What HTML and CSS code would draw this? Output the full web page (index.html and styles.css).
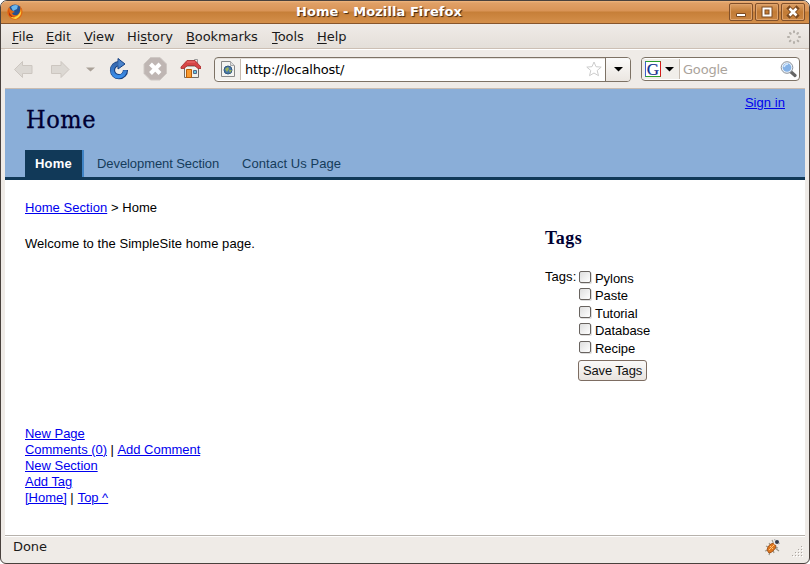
FILE: index.html
```html
<!DOCTYPE html>
<html lang="en">
<head>
<meta charset="utf-8">
<title>Home</title>
<link rel="stylesheet" href="styles.css">
</head>
<body>
<div class="window">
  <header class="titlebar">
    <svg class="fox" width="16" height="16" viewBox="0 0 16 16"><circle cx="8" cy="7.500" r="7" fill="#27518f"/><path d="M4 3Q7 0 11 1.500L10 5L6 7Z" fill="#69b6ee"/><path d="M2 3Q-.5 7 .5 10Q2.500 15.500 8 15.800Q14 15.500 15.500 9Q16 5 13 2Q14 9 10 11Q6 12 5 9L8 8L4 6Z" fill="#e36912"/><path d="M14 5Q15.500 12 9 15Q5 15 3 12Q9 15 12 10Q14 8 14 5Z" fill="#ffd43c"/><path d="M1.500 5Q2 9 4 11Q5 13 8 13Q4 14 2 11Z" fill="#b62c0c"/></svg>
    <h1 class="window-title">Home - Mozilla Firefox</h1>
    <div class="controls">
      <span class="control"><svg width="22" height="16"><path d="M6.500 9.500h9v3h-9z" fill="#fff" stroke="#7c4a20"/></svg></span>
      <span class="control"><svg width="22" height="16"><path d="M7.500 4.500h7v7h-7z" fill="none" stroke="#7c4a20" stroke-width="4"/><path d="M7.500 4.500h7v7h-7z" fill="none" stroke="#fff" stroke-width="2"/></svg></span>
      <span class="control"><svg width="22" height="16"><path d="M7.500 4.500l7 7m0-7l-7 7" stroke="#7c4a20" stroke-width="4.500" stroke-linecap="square"/><path d="M7.500 4.500l7 7m0-7l-7 7" stroke="#fff" stroke-width="2.600"/></svg></span>
    </div>
  </header>
  <nav class="menubar">
    <span class="menu m-file"><u>F</u>ile</span><span class="menu m-edit"><u>E</u>dit</span><span class="menu m-view"><u>V</u>iew</span><span class="menu m-history">Hi<u>s</u>tory</span><span class="menu m-bookmarks"><u>B</u>ookmarks</span><span class="menu m-tools"><u>T</u>ools</span><span class="menu"><u>H</u>elp</span>
    <svg class="throbber" width="16" height="16" viewBox="0 0 16 16"><g fill="none" stroke="#b5b0aa" stroke-width="2" stroke-linecap="round"><path d="M8 2.300v1M8 13v1M2 8h1M13 8h1M4 4l.7.7M11.600 11.600l.7.7M12 4l-.7.7M4.500 11.600l-.7.7"/></g></svg>
  </nav>
  <div class="toolbar">
    <svg class="nav-icons" width="196" height="38" viewBox="5 50 196 38">
      <defs><linearGradient id="reload" x1="0" y1="0" x2="0" y2="1"><stop stop-color="#3768ad"/><stop offset="1" stop-color="#3b8eea"/></linearGradient></defs>
      <g fill="#dcd8d3" stroke="#ccc6c0"><path d="M14.500 69.500l8-8v4h9.500v8h-9.500v4z"/><path d="M69 69.500l-8-8v4h-9.500v8h9.500v4z"/></g>
      <path d="M86 67.500h9l-4.500 4z" fill="#aaa198"/>
      <path d="M119 63.700A6.500 6.500 0 1 0 125.500 70" fill="none" stroke="#173f7e" stroke-width="5.200"/>
      <path d="M118 58.500l7 5.500-7 5z" fill="#4383d2" stroke="#173f7e"/>
      <path d="M119 63.700A6.500 6.500 0 1 0 125.200 70.200" fill="none" stroke="url(#reload)" stroke-width="3.600"/>
      <path d="M118.500 60l5 4-5 3z" fill="#4d83c8"/>
      <path d="M150.500 57.500h9.500l6.500 6.500v9.500l-6.500 6.500h-9.500L144 73.500V64z" fill="#bfb6b3" stroke="#cec8c4"/>
      <path d="M150.500 64l9.500 9.500m0-9.500L150.500 73.500" stroke="#fff" stroke-width="4"/>
      <path d="M184.500 66h14v11.500h-14z" fill="#f1f0ea" stroke="#716d68"/>
      <path d="M194.500 59.500h3v5h-3z" fill="#eee" stroke="#999"/>
      <path d="M181 67l6-6.500h8l6 6.500v1.500h-3l-3.500-3h-7l-3.500 3h-3z" fill="#d64545" stroke="#a52a2a" stroke-width=".8"/>
      <path d="M187 62h8" stroke="#ee7373"/>
      <path d="M186.500 69.500h5v8h-5z" fill="#f99a2f" stroke="#b95d08"/><path d="M193.500 70.500h3v3h-3z" fill="#62cae1" stroke="#568"/>
    </svg>
    <div class="address">
      <span class="favicon"><svg width="14" height="16"><path d="M.5.5h9l4 4v11H.5z" fill="#f4f4f2" stroke="#888"/><path d="M9.500.5v4h4" fill="#ddd" stroke="#aaa"/><circle cx="7" cy="9" r="4" fill="#4978a9" stroke="#315980"/><path d="M4 8l3-2 1 2-2 3zM8 9h3l-2 3z" fill="#9cb358"/></svg></span>
      <span class="url">http://localhost/</span>
      <svg class="star" width="16" height="16"><path d="M8 1l2 4.700 5.200.4-4 3.400 1.300 5.200L8 12l-4.500 2.700 1.300-5.200-4-3.400L6 5.700z" fill="#fff" stroke="#ccc"/></svg>
      <span class="drop"><svg width="9" height="5"><path d="M0 0h9L4.500 4.500z"/></svg></span>
    </div>
    <div class="search">
      <span class="engine"><b class="google">G</b><svg width="9" height="5"><path d="M0 0h9L4.500 4.500z"/></svg></span>
      <span class="placeholder">Google</span>
      <svg class="lens" width="17" height="17"><path d="M10.500 10.500l4.500 4" stroke="#666" stroke-width="3.200" stroke-linecap="round"/><circle cx="7" cy="6.500" r="5.800" fill="#edf3fa" stroke="#8a9199"/><circle cx="7" cy="6.500" r="4.300" fill="#85b2e6"/><path d="M4 6q1-3 4-3" fill="none" stroke="#d5e8fb" stroke-width="1.500"/></svg>
    </div>
  </div>
  <main class="page">
    <div class="banner">
      <div class="banner-top"><h2 class="heading">Home</h2><a class="signin" href="#">Sign in</a></div>
      <nav class="tabs"><a class="tab active">Home</a><a class="tab development">Development Section</a><a class="tab contact">Contact Us Page</a></nav>
    </div>
    <div class="content">
      <section class="left">
        <p class="crumbs"><a href="#">Home Section</a> &gt; Home</p>
        <p class="welcome">Welcome to the SimpleSite home page.</p>
      </section>
      <section class="right">
        <h3 class="tags-title">Tags</h3>
        <div class="tags-form">
          <span class="tags-label">Tags:</span>
          <div class="options">
            <label class="option"><i class="box"></i>Pylons</label>
            <label class="option"><i class="box"></i>Paste</label>
            <label class="option"><i class="box"></i>Tutorial</label>
            <label class="option"><i class="box"></i>Database</label>
            <label class="option"><i class="box"></i>Recipe</label>
            <button class="save">Save Tags</button>
          </div>
        </div>
      </section>
    </div>
    <footer class="links">
      <div><a href="#">New Page</a></div>
      <div><a href="#">Comments (0)</a> <span class="sep">|</span> <a href="#">Add Comment</a></div>
      <div><a href="#">New Section</a></div>
      <div><a href="#">Add Tag</a></div>
      <div><a href="#">[Home]</a> <span class="sep">|</span> <a href="#">Top ^</a></div>
    </footer>
  </main>
  <div class="status">
    <span class="done">Done</span>
    <svg class="bug" width="18" height="18"><path d="M5 5l2 3M2 8l4 2M1 13l4-1M5 17l1-3M10 15l-1-3M14 10l-3-1M8 2l2 4M15 13l-4-3" stroke="#99978a" stroke-width="1.200"/><path d="M3 12q1-6 7-7l2 3q-2 6-7 7z" fill="#df7820" stroke="#a6561c"/><path d="M5 12l5-5M6 8l3 3" stroke="#ffc47a"/><circle cx="12.500" cy="4" r="3" fill="#e8e8e8"/><circle cx="13" cy="4" r="2" fill="#333b4c"/><path d="M10 1.500l2 1M14 6l2-1" stroke="#aaa"/></svg>
    <svg class="grip" width="12" height="12"><g fill="#aaa5a0"><path d="M9 0h1v1H9zM6 3h1v1H6zM9 3h1v1H9zM3 6h1v1H3zM6 6h1v1H6zM9 6h1v1H9zM0 9h1v1H0zM3 9h1v1H3zM6 9h1v1H6zM9 9h1v1H9z"/></g><g fill="#fff"><path d="M10 1h1v1h-1zM7 4h1v1H7zM10 4h1v1h-1zM4 7h1v1H4zM7 7h1v1H7zM10 7h1v1h-1zM1 10h1v1H1zM4 10h1v1H4zM7 10h1v1H7zM10 10h1v1h-1z"/></g></svg>
  </div>
</div>
</body>
</html>
```
FILE: styles.css
```css
* { box-sizing: border-box; }
body { margin: 0; background: #fff; font-family: "DejaVu Sans", sans-serif; font-size: 13px; color: #1a1a1a; }
svg { display: block; flex: none; }
h1, h2, h3, p { margin: 0; }
.window { width: 810px; height: 564px; border: 1px solid #49413d; border-radius: 7px 7px 6px 6px; background: #efebe7; overflow: hidden; display: flex; flex-direction: column; }
.titlebar { height: 23px; flex: none; display: flex; align-items: center; padding: 0 4px 0 6px; background: linear-gradient(#efb67f 0, #e0a066 2px, #d99456 10px, #c67f38 11px, #d38e49 21px); border-bottom: 1px solid #87552c; }
.window-title { flex: 1; text-align: center; font-size: 13px; line-height: 20px; color: #fff; text-shadow: 1px 1px 1px #3e2510; padding-left: 6px; letter-spacing: .08px; }
.controls { display: flex; gap: 2px; }
.control { width: 24px; height: 18px; border: 1px solid #81502a; border-radius: 2px; box-shadow: inset 0 0 0 1px #dfa36b; background: linear-gradient(#dda066, #c27b35 50%, #ca8542); }
.menubar { height: 25px; flex: none; display: flex; align-items: center; padding: 1px 7px 0 11px; background: linear-gradient(#efebe7, #e4dfd9); border-bottom: 1px solid #ccbfb4; line-height: 18px; }
.menu { letter-spacing: -.05px; text-underline-offset: 2px; }
.menu u { text-decoration-thickness: 1px; }
.m-file { width: 34px; }
.m-edit { width: 38px; }
.m-view { width: 43px; }
.m-history { width: 59px; }
.m-bookmarks { width: 86px; letter-spacing: -.1px; }
.m-tools { width: 45px; }
.throbber { margin-left: auto; }
.toolbar { height: 40px; flex: none; border-top: 1px solid #fff; border-bottom: 1px solid #c9bcb1; margin: 0 4px; display: flex; align-items: center; }
.nav-icons { flex: none; margin-right: 13px; }
.address { width: 417px; height: 25px; border: 1px solid #7d7265; border-radius: 4px; background: #fff; display: flex; align-items: center; box-shadow: inset 0 1px #e5e1dc; overflow: hidden; }
.favicon { width: 26px; height: 21px; border-right: 1px solid #c6bbb0; display: flex; align-items: center; justify-content: center; background: #f3f1ee; border-radius: 3px 0 0 3px; }
.url { margin-left: 4px; color: #000; letter-spacing: -.2px; }
.star { margin-left: auto; margin-right: 3px; }
.drop { height: 23px; width: 25px; border-left: 1px solid #7d7265; background: linear-gradient(#fafafa, #f3f0ed 50%, #ebe6e1); display: flex; align-items: center; justify-content: center; }
.search { margin-left: 10px; width: 159px; height: 24px; border: 1px solid #7d7265; border-radius: 4px; background: #fff; display: flex; align-items: center; overflow: hidden; padding-right: 2px; }
.engine { width: 38px; height: 20px; border-right: 1px solid #c6bbb0; background: #f1eeea; display: flex; align-items: center; gap: 4px; padding-left: 3px; }
.google { width: 16px; height: 16px; border: 1px solid #2da02d; border-left-color: #3a5fcb; border-right-color: #d61c1c; background: #fff; color: #11308e; font: 17px/15px "Liberation Serif", serif; -webkit-text-stroke: .2px #11308e; display: flex; justify-content: center; }
.placeholder { margin-left: 3px; color: #aaa39b; letter-spacing: -.2px; }
.lens { margin-left: auto; }
.page { height: 446px; flex: none; margin: 0 4px; background: #fff; font: 13px/16px "Liberation Sans", sans-serif; letter-spacing: .05px; color: #000; }
.page a { color: #00e; text-decoration-thickness: 1px; text-underline-offset: 1px; }
.banner { height: 91px; background: #8aaed8; border-bottom: 3px solid #113958; padding: 0 20px; display: flex; flex-direction: column; justify-content: space-between; }
.banner-top { display: flex; justify-content: space-between; }
.heading { font: 25px/32px "DejaVu Serif Condensed", "DejaVu Serif", serif; font-stretch: condensed; color: #003; letter-spacing: .6px; margin: 15px 0 0 1px; -webkit-text-stroke: .3px #003; }
.signin { margin-top: 6px; }
.tabs { display: flex; height: 27px; line-height: 27px; }
.page .tab { color: #153c5b; margin-left: 13px; letter-spacing: -.08px; }
.page .development { width: 122px; white-space: nowrap; }
.page .tab.contact { margin-left: 23px; letter-spacing: .05px; }
.page .active { color: #fff; background: #113958; font-weight: bold; width: 59px; padding-left: 10px; margin-left: 0; border-right: 2px solid #3f83c4; letter-spacing: .2px; }
.content { display: flex; height: 246px; padding: 20px 20px 0; }
.left { width: 520px; }
.welcome { margin-top: 20px; }
.tags-title { font: bold 18px/22px "Liberation Serif", serif; color: #003; margin-top: 27px; letter-spacing: .5px; }
.tags-form { display: flex; margin-top: 20px; }
.tags-label { width: 34px; }
.options { padding-top: 1px; }
.option { display: flex; height: 17.400px; line-height: 18px; letter-spacing: -.05px; }
.box { width: 12px; height: 12px; margin: 1px 4px 0 0; border: 1px solid #68635f; border-radius: 2px; background: linear-gradient(135deg, #dedede, #fff); box-shadow: 1px 1px #ddd; }
.save { display: block; width: 69px; height: 21px; margin: 3px 0 0 -1px; padding: 1px 0 0; border: 1px solid #7d6d62; border-radius: 3px; background: linear-gradient(#faf9f8, #f2efec 50%, #e8e3de); font: 13px/18px "Liberation Sans", sans-serif; letter-spacing: -.15px; color: #111; }
.links { padding-left: 20px; letter-spacing: -.03px; }
.sep { letter-spacing: .6px; }
.status { flex: 1; display: flex; align-items: center; border-top: 1px solid #b7b2ac; margin: 0 4px; padding: 0 1px 5px 8px; box-shadow: inset 0 1px #fff; }
.done { letter-spacing: -.1px; line-height: 15px; padding-bottom: 2px; }
.bug { margin-left: auto; margin-right: 10px; }
.grip { margin-top: 9px; }
```
